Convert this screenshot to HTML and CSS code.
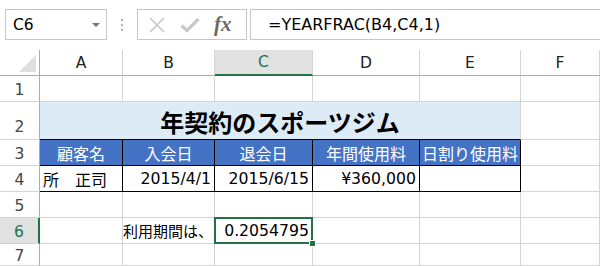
FILE: index.html
```html
<!DOCTYPE html>
<html lang="ja">
<head>
<meta charset="utf-8">
<link rel="stylesheet" href="styles.css">
</head>
<body>
<div class="toolbar">
  <div class="namebox"><span class="name">C6</span><span class="arrow"></span></div>
  <div class="dots"><i></i><i></i><i></i></div>
  <div class="fbtns">
    <svg class="ic" width="18" height="18" viewBox="0 0 18 18"><path d="M2 2 L16 16 M16 2 L2 16" stroke="#c8c8c8" stroke-width="1.6" fill="none"/></svg>
    <svg class="ic" width="20" height="18" viewBox="0 0 20 18"><path d="M1.5 9.5 L7 14.5 L18.5 3" stroke="#c8c8c8" stroke-width="3.2" fill="none"/></svg>
    <span class="fx">fx</span>
  </div>
  <div class="formula">=YEARFRAC(B4,C4,1)</div>
</div>
<div class="sheet">
  <div class="corner"><span class="tri"></span></div>
  <div class="ch">A</div><div class="ch">B</div><div class="ch sel-h">C</div><div class="ch">D</div><div class="ch">E</div><div class="ch">F</div>

  <div class="rh">1</div>
  <div class="c"></div><div class="c"></div><div class="c"></div><div class="c"></div><div class="c"></div><div class="c"></div>

  <div class="rh tall">2</div>
  <div class="c title">年契約のスポーツジム</div><div class="c"></div>

  <div class="rh">3</div>
  <div class="c hd">顧客名</div><div class="c hd">入会日</div><div class="c hd">退会日</div><div class="c hd">年間使用料</div><div class="c hd">日割り使用料</div><div class="c"></div>

  <div class="rh">4</div>
  <div class="c bx jp">所　正司</div><div class="c bx r num">2015/4/1</div><div class="c bx r num">2015/6/15</div><div class="c bx r num">¥360,000</div><div class="c bx"></div><div class="c"></div>

  <div class="rh">5</div>
  <div class="c"></div><div class="c"></div><div class="c"></div><div class="c"></div><div class="c"></div><div class="c"></div>

  <div class="rh sel-r">6</div>
  <div class="c"></div><div class="c r jps">利用期間は、</div><div class="c active num"><span class="val">0.2054795</span><span class="selbox"></span><span class="handle"></span></div><div class="c"></div><div class="c"></div><div class="c"></div>

  <div class="rh">7</div>
  <div class="c"></div><div class="c"></div><div class="c"></div><div class="c"></div><div class="c"></div><div class="c"></div>
</div>
</body>
</html>
```

FILE: styles.css
```css
* { box-sizing: border-box; }
html, body { margin: 0; padding: 0; background: #fff; }
body {
  width: 600px;
  height: 266px;
  overflow: hidden;
  font-family: "DejaVu Sans", "Noto Sans CJK JP", sans-serif;
  font-size: 15px;
  color: #000;
}
.toolbar {
  height: 50px;
  padding-top: 9px;
  display: flex;
  align-items: flex-start;
}
.namebox {
  margin-left: 5px;
  width: 102px;
  height: 31px;
  border: 1px solid #c6c6c6;
  display: flex;
  align-items: center;
  justify-content: space-between;
  padding: 0 6px 0 7px;
}
.name { font-size: 15.5px; color: #000; }
.arrow {
  width: 0; height: 0;
  border-left: 4px solid transparent;
  border-right: 4px solid transparent;
  border-top: 4px solid #777;
}
.dots {
  width: 30px;
  height: 31px;
  display: flex;
  flex-direction: column;
  align-items: center;
  justify-content: center;
  gap: 3px;
}
.dots i { display: block; width: 2px; height: 2px; background: #b0b0b0; }
.fbtns {
  width: 110px;
  height: 31px;
  border: 1px solid #c6c6c6;
  display: flex;
  align-items: center;
  padding-left: 10px;
  gap: 14px;
}
.fx {
  font-family: "Liberation Serif", "DejaVu Serif", serif;
  font-style: italic;
  font-weight: 700;
  font-size: 21px;
  color: #6a6a6a;
  margin-left: 0;
  line-height: 1;
}
.formula {
  margin-left: 3px;
  flex: 1;
  height: 31px;
  border-top: 1px solid #c6c6c6;
  border-bottom: 1px solid #c6c6c6;
  border-left: 1px solid #c6c6c6;
  padding-left: 17px;
  display: flex;
  align-items: center;
  font-size: 16px;
}
.sheet {
  display: grid;
  grid-template-columns: 40px 83px 92px 98px 107px 101px 79px;
  grid-template-rows: 26px 26px 38px 26px 26px 26px 26px 22px;
}
.corner {
  border-right: 1px solid #ababab;
  border-bottom: 1px solid #ababab;
  position: relative;
}
.tri {
  position: absolute;
  right: 3px;
  bottom: 3px;
  width: 0; height: 0;
  border-left: 17px solid transparent;
  border-bottom: 17px solid #dfdfdf;
}
.ch {
  border-right: 1px solid #d4d4d4;
  border-bottom: 1px solid #ababab;
  display: flex;
  align-items: center;
  justify-content: center;
  color: #222;
  font-size: 15.5px;
}
.ch.sel-h {
  background: #e1e1e1;
  border-bottom: 2px solid #217346;
  color: #217346;
}
.rh {
  border-right: 1px solid #ababab;
  border-bottom: 1px solid #d4d4d4;
  display: flex;
  align-items: center;
  justify-content: center;
  color: #444;
  font-size: 15.5px;
  padding-top: 2px;
}
.rh.tall { padding-top: 12px; }
.rh.sel-r {
  background: #e1e1e1;
  border-right: 2px solid #217346;
  color: #217346;
}
.c {
  border-right: 1px solid #d4d4d4;
  border-bottom: 1px solid #d4d4d4;
  display: flex;
  align-items: center;
  padding: 0 3px;
  white-space: nowrap;
}
.c.r { justify-content: flex-end; }
.num { font-size: 15.7px; }
.jp { font-size: 16px; }
.jps { font-size: 15px; padding-right: 1px; }
.title {
  grid-column: 2 / 7;
  background: #ddebf7;
  border-bottom: 1px solid #000;
  justify-content: center;
  font-family: "Noto Sans CJK JP", sans-serif;
  font-weight: 700;
  font-size: 24px;
  padding-top: 2px;
}
.hd {
  background: #4472c4;
  color: #fff;
  border-right: 1px solid #000;
  border-bottom: 1px solid #000;
  justify-content: center;
  font-size: 16px;
  padding: 0;
}
.bx {
  border-right: 1px solid #000;
  border-bottom: 1px solid #000;
}
.active {
  position: relative;
  justify-content: flex-end;
}
.selbox {
  position: absolute;
  left: -1px; top: -1px; right: -1px; bottom: -1px;
  border: 2px solid #217346;
}
.handle {
  position: absolute;
  right: -4px;
  bottom: -4px;
  width: 7px;
  height: 7px;
  background: #217346;
  border: 1px solid #fff;
}
```
